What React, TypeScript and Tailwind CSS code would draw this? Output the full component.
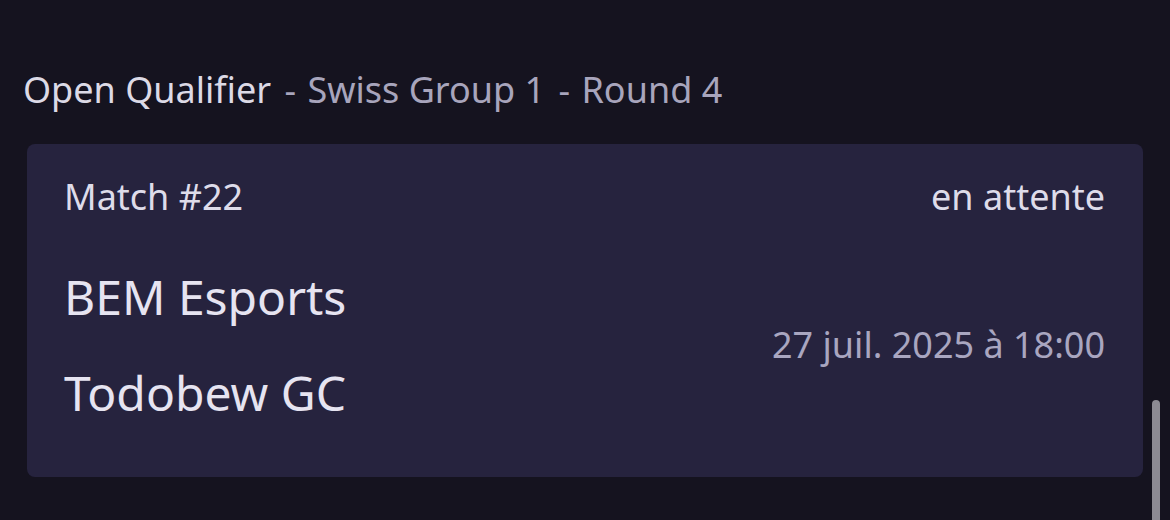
const font = { fontFamily: '"Noto Sans", "Open Sans", sans-serif' }

function Sep() {
  return <span className="ml-[4px] mr-[2px]"> - </span>
}

function MatchCard() {
  return (
    <div className="rounded-[8px] bg-[#26233e] pl-[37px] pr-[38px] pt-[29px] pb-[52px]">
      <div className="flex justify-between text-[36px] leading-[48px] text-[#dedcea]">
        <span>Match #22</span>
        <span>en attente</span>
      </div>
      <div className="mt-[44px] flex items-center justify-between">
        <div className="flex flex-col gap-[32px] text-[48px] leading-[64px] text-[#e6e4f1]">
          <span>BEM Esports</span>
          <span>Todobew GC</span>
        </div>
        <span className="text-[36px] leading-[48px] text-[#a9a6c0]">27 juil. 2025 à 18:00</span>
      </div>
    </div>
  )
}

export default function App() {
  return (
    <div className="relative h-[520px] w-[1170px] overflow-hidden bg-[#15131f]" style={font}>
      <div className="pl-[23px] pr-[27px] pt-[66px]">
        <h2 className="text-[36px] leading-[48px] font-normal text-[#a8a5bc]">
          <span className="text-[#dcdae6]">Open Qualifier</span>
          <Sep />
          Swiss Group 1
          <Sep />
          Round 4
        </h2>
        <div className="mt-[30px] pl-[4px]">
          <MatchCard />
        </div>
      </div>
      {/* scrollbar overlay */}
      <div className="absolute left-[1152px] top-[400px] h-[140px] w-[8px] rounded-full bg-[#8c8a93]" />
    </div>
  )
}
